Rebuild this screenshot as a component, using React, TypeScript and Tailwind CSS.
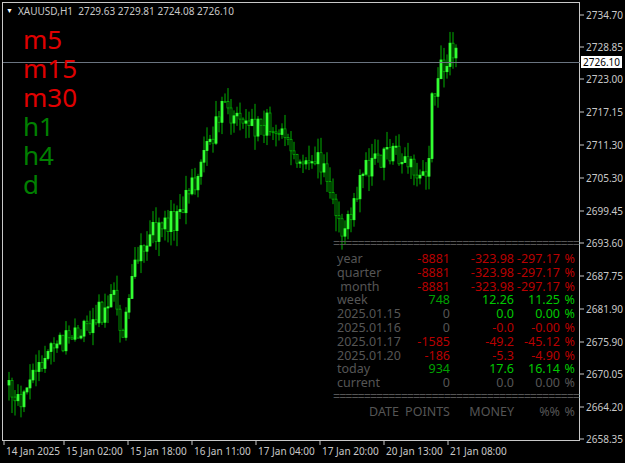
import React from "react";

// rough close path for the candles (x, y in pixels)
const KEYS: [number, number][] = [
  [8, 385], [20, 400], [30, 380], [42, 355], [55, 345], [70, 340], [85, 325], [100, 312],
  [112, 300], [122, 325], [132, 262], [145, 238], [160, 228], [175, 222], [188, 195],
  [200, 160], [212, 135], [222, 98], [232, 118], [245, 125], [262, 122], [280, 138],
  [295, 150], [310, 158], [322, 165], [333, 195], [342, 235], [350, 215], [358, 180],
  [372, 160], [388, 152], [405, 158], [418, 170], [426, 182], [430, 110], [438, 70],
  [448, 55], [456, 48],
];

function yAt(x: number) {
  for (let i = 0; i < KEYS.length - 1; i++) {
    const [x0, y0] = KEYS[i];
    const [x1, y1] = KEYS[i + 1];
    if (x >= x0 && x <= x1) return y0 + ((y1 - y0) * (x - x0)) / (x1 - x0);
  }
  return KEYS[KEYS.length - 1][1];
}

function rnd(seed: number) {
  const s = Math.sin(seed * 12.9898) * 43758.5453;
  return s - Math.floor(s);
}

const candles = (() => {
  const out: { x: number; o: number; c: number; h: number; l: number }[] = [];
  let prev = yAt(8);
  for (let x = 8; x <= 456; x += 3) {
    const base = yAt(x);
    const c = base + (rnd(x) - 0.5) * 26;
    const o = prev;
    const h = Math.min(o, c) - rnd(x + 1) * 16;
    const l = Math.max(o, c) + rnd(x + 2) * 16;
    out.push({ x, o, c, h, l });
    prev = c;
  }
  return out;
})();

const axis = [
  ["2734.70", 15], ["2728.85", 47], ["2723.00", 79], ["2717.15", 112], ["2711.30", 145],
  ["2705.30", 178], ["2699.45", 211], ["2693.60", 243], ["2687.75", 276], ["2681.90", 309],
  ["2675.90", 342], ["2670.05", 374], ["2664.20", 407], ["2658.35", 439],
] as const;

const times = [
  ["14 Jan 2025", 4], ["15 Jan 02:00", 64], ["15 Jan 18:00", 128], ["16 Jan 11:00", 192],
  ["17 Jan 04:00", 256], ["17 Jan 20:00", 320], ["20 Jan 13:00", 384], ["21 Jan 08:00", 448],
] as const;

const R = "text-[#b80000]";
const G = "text-[#00c800]";
const D = "text-[#00a000]";
const N = "text-[#555555]";

const rows: [string, string, string, string, string, string][] = [
  ["year", "-8881", "-323.98", "-297.17", R, R],
  ["quarter", "-8881", "-323.98", "-297.17", R, R],
  [" month", "-8881", "-323.98", "-297.17", R, R],
  ["week", "748", "12.26", "11.25", D, G],
  ["2025.01.15", "0", "0.0", "0.00", N, G],
  ["2025.01.16", "0", "-0.0", "-0.00", N, R],
  ["2025.01.17", "-1585", "-49.2", "-45.12", R, R],
  ["2025.01.20", "-186", "-5.3", "-4.90", R, R],
  ["today", "934", "17.6", "16.14", D, G],
  ["current", "0", "0.0", "0.00", N, N],
];

const tfs = [
  ["m5", "text-[#e00000]"], ["m15", "text-[#e00000]"], ["m30", "text-[#e00000]"],
  ["h1", "text-[#008000]"], ["h4", "text-[#008000]"], ["d", "text-[#008000]"],
];

export default function App() {
  return (
    <div className="relative w-[625px] h-[463px] bg-black overflow-hidden font-['Liberation_Sans',sans-serif]">
      <svg width="625" height="463" className="absolute inset-0">
        <rect x="2.5" y="2.5" width="577" height="438" fill="none" stroke="#c8c8c8" />
        {candles.map((k, i) => {
          const top = Math.min(k.o, k.c);
          const hgt = Math.max(1, Math.abs(k.c - k.o));
          const bull = k.c < k.o;
          return (
            <g key={i}>
              <line x1={k.x + 1} x2={k.x + 1} y1={k.h} y2={k.l} stroke="#00b000" />
              <rect x={k.x} y={top} width="2" height={hgt} fill={bull ? "#33ff33" : "#000"} stroke={bull ? "#33ff33" : "#00b000"} strokeWidth="0.8" />
            </g>
          );
        })}
        <line x1="3" x2="580" y1="62.5" y2="62.5" stroke="#6a7480" strokeWidth="1.2" />
        {axis.map(([, y]) => (
          <line key={y} x1="580" x2="584" y1={y} y2={y} stroke="#c8c8c8" />
        ))}
        {times.map(([, x]) => (
          <line key={x} x1={x} x2={x} y1="441" y2="445" stroke="#c8c8c8" />
        ))}
      </svg>

      <div className="absolute left-[6px] top-[4px] flex items-center gap-[5px] text-[10px] text-[#c8c8c8]">
        <span className="text-[7px] text-white">▼</span>
        <span>XAUUSD,H1&nbsp;&nbsp;2729.63 2729.81 2724.08 2726.10</span>
      </div>

      <div className="absolute left-[23px] top-[25px] flex flex-col text-[26px] leading-[29px]">
        {tfs.map(([t, c]) => (
          <span key={t} className={c}>{t}</span>
        ))}
      </div>

      {axis.map(([t, y]) => (
        <span key={t} className="absolute left-[586px] text-[10px] leading-[12px] text-[#c8c8c8]" style={{ top: y - 6 }}>
          {t}
        </span>
      ))}
      <span className="absolute left-[581px] top-[56px] bg-white px-[2px] text-[10px] leading-[12px] text-black">2726.10</span>

      {times.map(([t, x]) => (
        <span key={t} className="absolute top-[445px] text-[10px] leading-[12px] text-[#c8c8c8]" style={{ left: x + 2 }}>
          {t}
        </span>
      ))}

      <div className="absolute left-[333px] top-[240px] w-[244px] text-[12.5px] leading-[13.8px] text-[#555555]">
        <div className="whitespace-nowrap leading-[8px] tracking-[-1px]">{"=".repeat(40)}</div>
        <div className="mt-[4px]">
          {rows.map(([label, pts, money, pct, pc, mc]) => (
            <div key={label} className="flex whitespace-pre">
              <span className="w-[65px] pl-[4px]">{label}</span>
              <span className={`w-[52px] text-right ${pc}`}>{pts}</span>
              <span className={`w-[64px] text-right ${mc}`}>{money}</span>
              <span className={`w-[46px] text-right ${mc}`}>{pct}</span>
              <span className={`w-[15px] text-right ${mc}`}>%</span>
            </div>
          ))}
        </div>
        <div className="whitespace-nowrap leading-[8px] tracking-[-1px] mt-[3px]">{"=".repeat(40)}</div>
        <div className="flex mt-[4px]">
          <span className="w-[66px] text-right">DATE</span>
          <span className="w-[51px] text-right">POINTS</span>
          <span className="w-[64px] text-right">MONEY</span>
          <span className="w-[46px] text-right">%%</span>
          <span className="w-[15px] text-right">%</span>
        </div>
      </div>
    </div>
  );
}
